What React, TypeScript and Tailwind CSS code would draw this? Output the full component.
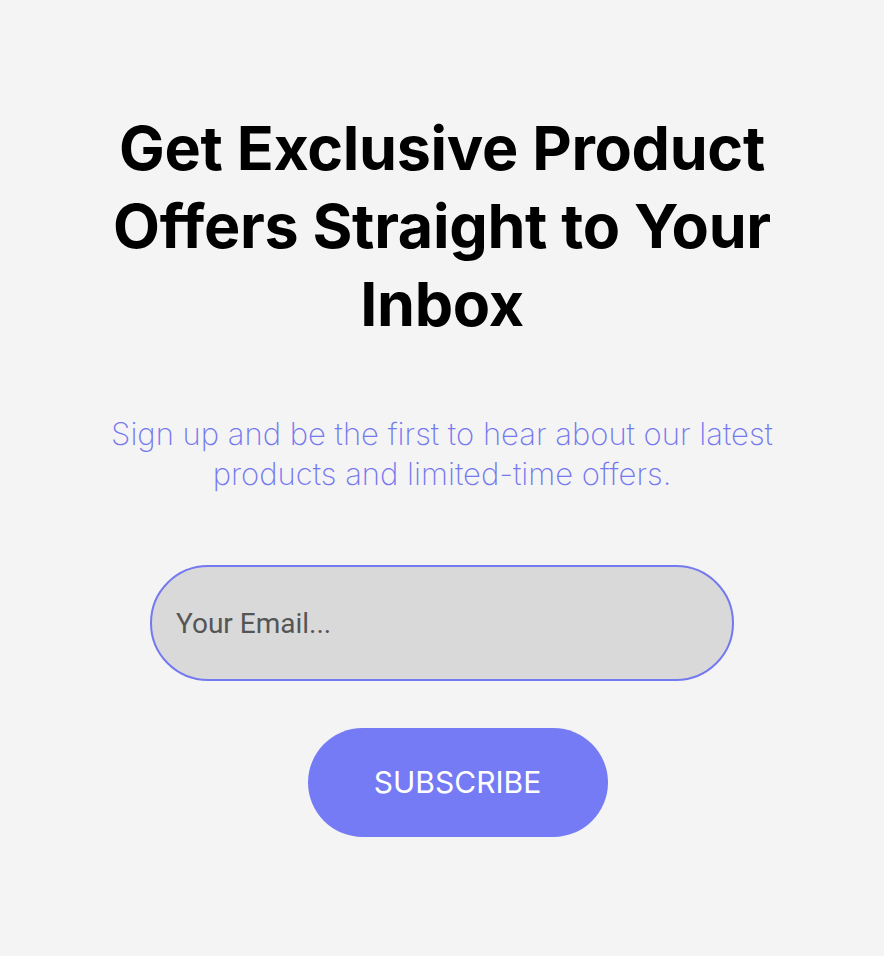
export default function App() {
  return (
    <div className="min-h-[956px] w-full bg-[#f4f4f4] flex flex-col items-center" style={{ fontFamily: "Inter, 'Liberation Sans', sans-serif" }}>
      <h1 className="mt-[109px] w-[720px] text-center text-[61px] leading-[78px] font-bold tracking-[-0.005em] text-black">
        Get Exclusive Product Offers Straight to Your Inbox
      </h1>
      <p className="mt-[71px] w-[720px] text-center text-[31px] leading-[40px] font-extralight text-[#7479f0]">
        Sign up and be the first to hear about our latest products and limited-time offers.
      </p>
      <input
        type="email"
        placeholder="Your Email..."
        className="mt-[71px] w-[584px] h-[116px] rounded-full border-2 border-[#7479f0] bg-[#d9d9d9] pl-[24px] text-[28px] text-[#555] placeholder:text-[#555] outline-none"
        style={{ fontFamily: "Roboto, 'Liberation Sans', sans-serif" }}
      />
      <button className="mt-[47px] ml-[31px] w-[300px] h-[109px] rounded-full bg-[#757bf4] text-white text-[30px]">
        SUBSCRIBE
      </button>
    </div>
  );
}
